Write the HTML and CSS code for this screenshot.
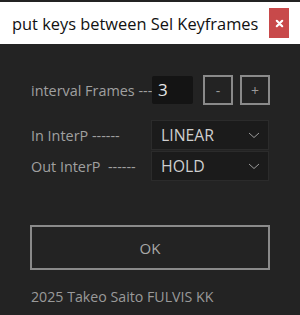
FILE: index.html
```html
<!DOCTYPE html>
<html>
<head>
<meta charset="utf-8">
<link rel="stylesheet" href="styles.css">
</head>
<body>
<div class="titlebar">
  <span class="title">put keys between Sel Keyframes</span>
  <button class="close"><svg width="9" height="9" viewBox="0 0 10 10"><path d="M2 2 L8 8 M8 2 L2 8" stroke="#fff" stroke-width="2.4" stroke-linecap="round"/></svg></button>
</div>
<div class="content">
  <div class="row row-interval">
    <span class="label label-interval">interval Frames ---</span>
    <div class="num">3</div>
    <button class="step step-minus">-</button>
    <button class="step step-plus">+</button>
  </div>
  <div class="selects">
    <div class="row row-sel">
      <span class="label label-sel">In InterP ------</span>
      <div class="select"><span>LINEAR</span><svg class="chev" width="12" height="7" viewBox="0 0 12 7"><path d="M1 1 L6 5.5 L11 1" fill="none" stroke="#9a9a9a" stroke-width="1"/></svg></div>
    </div>
    <div class="row row-sel">
      <span class="label label-sel">Out InterP&nbsp;&nbsp;------</span>
      <div class="select"><span>HOLD</span><svg class="chev" width="12" height="7" viewBox="0 0 12 7"><path d="M1 1 L6 5.5 L11 1" fill="none" stroke="#9a9a9a" stroke-width="1"/></svg></div>
    </div>
  </div>
  <button class="ok">OK</button>
  <div class="footer">2025 Takeo Saito FULVIS KK</div>
</div>
</body>
</html>
```
FILE: styles.css
```css
html, body {
  margin: 0;
  padding: 0;
  background: #232323;
  width: 300px;
  height: 315px;
  overflow: hidden;
  font-family: "Open Sans", "Noto Sans", sans-serif;
}
.titlebar {
  margin-top: 2px;
  height: 42px;
  background: #fff;
  display: flex;
  align-items: center;
  padding-left: 12px;
  box-sizing: border-box;
}
.title {
  font-size: 16.4px;
  color: #111;
  flex: 1;
  white-space: nowrap;
}
.close {
  width: 20px;
  height: 30px;
  margin-right: 11px;
  background: #c8494a;
  border: none;
  padding: 0;
  display: flex;
  align-items: center;
  justify-content: center;
}
.content {
  padding: 31px 30px 0 31px;
}
.row {
  display: flex;
  align-items: center;
}
.label {
  color: #a0a0a0;
  font-size: 14.4px;
  white-space: nowrap;
  flex-shrink: 0;
}
.label-interval { width: 121px; }
.label-sel { width: 120px; }
.row-interval { height: 30px; }
.num {
  width: 41px;
  height: 28px;
  box-sizing: border-box;
  background: #141414;
  border-radius: 2px;
  color: #e6e6e6;
  font-size: 17px;
  line-height: 28px;
  padding-left: 6px;
  position: relative;
}
.step {
  width: 30px;
  height: 30px;
  box-sizing: border-box;
  background: transparent;
  border: 2px solid #8a8a8a;
  color: #9a9a9a;
  font-family: "Open Sans", sans-serif;
  font-size: 14px;
  padding: 0;
}
.step-minus { margin-left: 10px; }
.step-plus { margin-left: 7px; }
.selects {
  margin-top: 15px;
  display: flex;
  flex-direction: column;
  gap: 1px;
}
.row-sel { height: 30px; }
.select {
  width: 118px;
  height: 30px;
  box-sizing: border-box;
  background: #1b1b1b;
  border: 1px solid #2b2b2b;
  display: flex;
  align-items: center;
  justify-content: space-between;
  padding: 0 8px 0 9px;
  color: #cfcfcf;
  font-size: 15.8px;
}
.chev { margin-top: 1px; }
.ok {
  display: block;
  margin: 44px 0 0 -1px;
  width: 240px;
  height: 45px;
  box-sizing: border-box;
  background: transparent;
  border: 2px solid #8a8a8a;
  color: #a8a8a8;
  font-family: "Open Sans", sans-serif;
  font-size: 15px;
  padding: 0;
}
.footer {
  margin-top: 17px;
  color: #9a9a9a;
  font-size: 14.2px;
}
```
